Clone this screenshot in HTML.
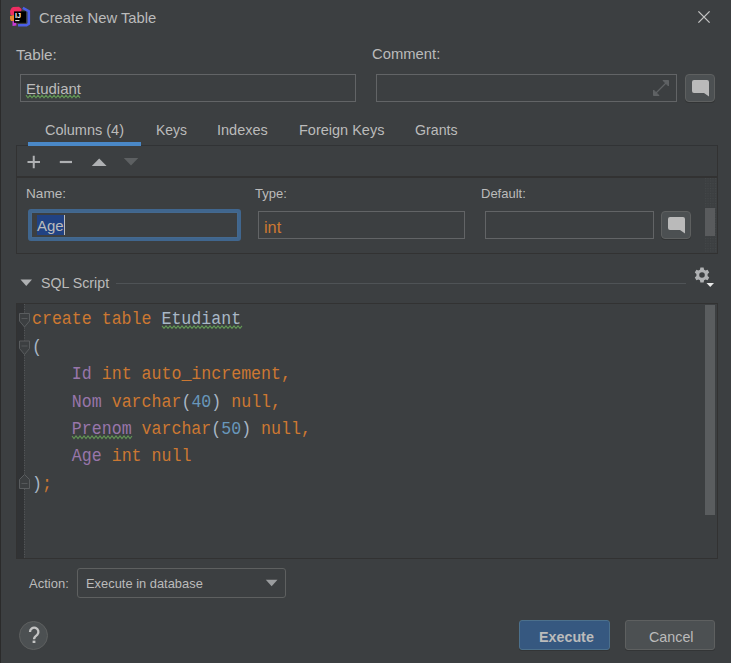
<!DOCTYPE html>
<html><head><meta charset="utf-8">
<style>
*{box-sizing:border-box;margin:0;padding:0}
html,body{width:731px;height:663px;overflow:hidden;background:#3c3f41}
body{position:relative;font-family:"Liberation Sans",sans-serif;color:#bbbbbb;font-size:14.5px}
.a{position:absolute}
.t{position:absolute;white-space:pre;line-height:20px}
.field{position:absolute;border:1px solid #626466}
.btn{position:absolute;border:1px solid #5e6060;background:#4c5052;border-radius:3px}
.code{position:absolute;font-family:"Liberation Mono",monospace;font-size:16.6px;white-space:pre;line-height:27.43px;color:#a9b7c6}
.k{color:#cc7832}.v{color:#9876aa}.n{color:#6897bb}
</style></head><body>
<div class="a" style="left:0;top:0;width:1px;height:663px;background:#2b2b2b"></div>

<!-- title icon -->
<svg class="a" style="left:0;top:0" width="36" height="32" viewBox="0 0 36 32">
  <path d="M13 7 L19 6.8 L21.5 9 L21 13 L13 15.5 L10.5 15 L10 11 L11.5 8 Z" fill="#ee2d62"/>
  <path d="M10 16 L14 15 L14.5 21 L11 21 L10 19 Z" fill="#e8842f"/>
  <path d="M12.5 21 L16 21.5 L16.5 25.5 L12.5 26 Z" fill="#c83ad2"/>
  <path d="M22.8 7.8 L28.8 11.2 L28.8 23.8 L26.5 25.3 L18 25.3" fill="none" stroke="#4b5fe6" stroke-width="2.6"/>
  <rect x="14" y="11.4" width="12" height="11.4" fill="#000"/>
  <text x="15" y="18" font-family="Liberation Sans" font-weight="bold" font-size="7.2" fill="#fff">IJ</text>
  <rect x="15.2" y="20" width="4.2" height="1.1" fill="#ddd"/>
</svg>
<div class="t" style="left:39px;top:8px;font-size:14.8px">Create New Table</div>
<!-- close -->
<svg class="a" style="left:696px;top:9px" width="16" height="16" viewBox="0 0 16 16">
  <path d="M2.4 2.4 L13.6 13.6 M13.6 2.4 L2.4 13.6" stroke="#c4c4c4" stroke-width="1.3"/>
</svg>

<div class="t" style="left:16px;top:45px;font-size:15.3px">Table:</div>
<div class="t" style="left:372px;top:44px;font-size:14.8px">Comment:</div>

<div class="field" style="left:20px;top:74px;width:336px;height:28px"></div>
<div class="t" style="left:26px;top:79px;font-size:15px">Etudiant</div>

<div class="field" style="left:376px;top:74px;width:301px;height:28px"></div>
<div class="btn" style="left:685px;top:74px;width:30px;height:28px;border-radius:4px;box-shadow:0 1px 0 #323435"></div>
<svg class="a" style="left:692px;top:80px" width="18" height="17" viewBox="0 0 18 17"><path d="M2 0 L15 0 Q17 0 17 2 L17 16.5 L12 13 L2 13 Q0 13 0 11 L0 2 Q0 0 2 0 Z" fill="#bababa"/></svg>
<svg class="a" style="left:652px;top:79px" width="18" height="18" viewBox="0 0 18 18"><path d="M11 1.5 L16.5 1.5 L16.5 7 Z M1.5 11 L1.5 16.5 L7 16.5 Z" fill="#5f6264" stroke="#5f6264" stroke-width="1"/><path d="M14.5 3.5 L3.5 14.5" stroke="#5f6264" stroke-width="1.3"/></svg>

<!-- tabs -->
<div class="t" style="left:45px;top:120px">Columns (4)</div>
<div class="t" style="left:156px;top:120px;font-size:13.9px">Keys</div>
<div class="t" style="left:217px;top:120px">Indexes</div>
<div class="t" style="left:299px;top:120px">Foreign Keys</div>
<div class="t" style="left:415px;top:120px;font-size:14.2px">Grants</div>
<div class="a" style="left:28px;top:142px;width:113px;height:4px;background:#4a88c7;z-index:2"></div>

<!-- columns panel -->
<div class="a" style="left:16px;top:145px;width:702px;height:109px;border:1px solid #323232;border-top-color:#313335"></div>
<div class="a" style="left:16px;top:176px;width:702px;height:2px;background:#323232"></div>

<svg class="a" style="left:20px;top:150px" width="125" height="24" viewBox="0 0 125 24">
 <path d="M7.5 12 L20 12 M13.75 5.8 L13.75 18.2" stroke="#afb1b3" stroke-width="2"/>
 <path d="M39.8 12 L52 12" stroke="#afb1b3" stroke-width="2.2"/>
 <path d="M71.8 16 L86.6 16 L79.2 8.5 Z" fill="#afb1b3"/>
 <path d="M103.8 8 L118.3 8 L111 15.6 Z" fill="#5d6062"/>
</svg>
<div class="t" style="left:26px;top:184px;font-size:13.6px">Name:</div>
<div class="t" style="left:255px;top:184px;font-size:13px">Type:</div>
<div class="t" style="left:481px;top:184px;font-size:13px">Default:</div>

<div class="a" style="left:28px;top:209px;width:213px;height:32px;border:3px solid #40668e;border-radius:3px"></div>
<div class="a" style="left:31px;top:212px;width:207px;height:26px;border:1px solid #44698f"></div>
<div class="a" style="left:37px;top:215px;width:27px;height:20px;background:#214283"></div>
<div class="a" style="left:64px;top:215px;width:1px;height:20px;background:#bbbbbb"></div>
<div class="t" style="left:37px;top:216px;font-size:15px">Age</div>
<div class="t" style="left:264px;top:216.5px;font-size:16.3px;color:#cc7832">int</div>
<div class="field" style="left:258px;top:211px;width:207px;height:28px"></div>
<div class="field" style="left:485px;top:211px;width:169px;height:28px"></div>
<div class="btn" style="left:661px;top:211px;width:30px;height:28px;border-radius:4px;box-shadow:0 1px 0 #323435"></div>
<svg class="a" style="left:668px;top:217px" width="18" height="17" viewBox="0 0 18 17"><path d="M2 0 L15 0 Q17 0 17 2 L17 16.5 L12 13 L2 13 Q0 13 0 11 L0 2 Q0 0 2 0 Z" fill="#bababa"/></svg>
<svg class="a" style="left:705px;top:178px" width="12" height="75"><defs><pattern id="dp" width="2.5" height="2.5" patternUnits="userSpaceOnUse"><rect x="0" y="0" width="1" height="1" fill="#45484a"/></pattern></defs><rect width="12" height="75" fill="url(#dp)"/></svg>
<div class="a" style="left:705px;top:208px;width:10px;height:28px;background:#595b5d"></div>

<div class="t" style="left:41px;top:273px;font-size:14.2px">SQL Script</div>
<svg class="a" style="left:20px;top:279px" width="13" height="8" viewBox="0 0 13 8"><path d="M0.5 0.5 L12 0.5 L6.25 7 Z" fill="#afb1b3"/></svg>
<div class="a" style="left:116px;top:283px;width:570px;height:1px;background:#4f5356"></div>
<svg class="a" style="left:692px;top:265px" width="24" height="24" viewBox="0 0 24 24">
 <g transform="translate(10,10)" fill="#afb1b3">
  <path fill-rule="evenodd" d="M-1.6 -7.4 L1.6 -7.4 L2.1 -5.3 L3.6 -4.5 L5.6 -5.3 L7.2 -2.5 L5.6 -1.1 L5.6 1.1 L7.2 2.5 L5.6 5.3 L3.6 4.5 L2.1 5.3 L1.6 7.4 L-1.6 7.4 L-2.1 5.3 L-3.6 4.5 L-5.6 5.3 L-7.2 2.5 L-5.6 1.1 L-5.6 -1.1 L-7.2 -2.5 L-5.6 -5.3 L-3.6 -4.5 L-2.1 -5.3 Z M0 -2.8 A2.8 2.8 0 1 0 0 2.8 A2.8 2.8 0 1 0 0 -2.8 Z"/>
 </g>
 <path d="M14.5 18 L22 18 L18.25 22 Z" fill="#e8e8e8"/>
</svg>

<!-- editor -->
<div class="a" style="left:16px;top:303px;width:702px;height:256px;border:1px solid #323232"></div>
<div class="a" style="left:17px;top:304px;width:7px;height:254px;background:#313335"></div>
<div class="a" style="left:705px;top:305px;width:10px;height:210px;background:#5a5d5f"></div>

<svg class="a" style="left:0;top:0" width="731" height="663" viewBox="0 0 731 663">
 <g stroke="#56595b" stroke-width="1" fill="none" stroke-dasharray="1 1.5">
  <path d="M24.5 304 V313 M24.5 327.5 V340.5 M24.5 355 V474 M24.5 489 V558"/>
 </g>
 <g stroke="#5a5d5f" stroke-width="1" fill="#3c3f41">
  <path d="M19.5 313.5 H29.5 V321 L24.5 327 L19.5 321 Z"/>
  <path d="M19.5 341 H29.5 V348.5 L24.5 354.5 L19.5 348.5 Z"/>
  <path d="M24.5 474.5 L29.5 479.5 V488.5 H19.5 V479.5 Z"/>
 </g>
 <g stroke="#55585a" stroke-width="1">
  <path d="M21.5 318.5 H27.5 M21.5 346 H27.5 M21.5 483.5 H27.5"/>
 </g>
 <polyline points="162.0,325.8 164.0,328.4 166.0,325.8 168.0,328.4 170.0,325.8 172.0,328.4 174.0,325.8 176.0,328.4 178.0,325.8 180.0,328.4 182.0,325.8 184.0,328.4 186.0,325.8 188.0,328.4 190.0,325.8 192.0,328.4 194.0,325.8 196.0,328.4 198.0,325.8 200.0,328.4 202.0,325.8 204.0,328.4 206.0,325.8 208.0,328.4 210.0,325.8 212.0,328.4 214.0,325.8 216.0,328.4 218.0,325.8 220.0,328.4 222.0,325.8 224.0,328.4 226.0,325.8 228.0,328.4 230.0,325.8 232.0,328.4 234.0,325.8 236.0,328.4 238.0,325.8 240.0,328.4 242.0,325.8" fill="none" stroke="#629755" stroke-width="1.1"/>
 <polyline points="72.0,436.0 74.0,438.6 76.0,436.0 78.0,438.6 80.0,436.0 82.0,438.6 84.0,436.0 86.0,438.6 88.0,436.0 90.0,438.6 92.0,436.0 94.0,438.6 96.0,436.0 98.0,438.6 100.0,436.0 102.0,438.6 104.0,436.0 106.0,438.6 108.0,436.0 110.0,438.6 112.0,436.0 114.0,438.6 116.0,436.0 118.0,438.6 120.0,436.0 122.0,438.6 124.0,436.0 126.0,438.6 128.0,436.0 130.0,438.6 132.0,436.0" fill="none" stroke="#629755" stroke-width="1.1"/>
 <polyline points="26.0,95.2 28.0,97.8 30.0,95.2 32.0,97.8 34.0,95.2 36.0,97.8 38.0,95.2 40.0,97.8 42.0,95.2 44.0,97.8 46.0,95.2 48.0,97.8 50.0,95.2 52.0,97.8 54.0,95.2 56.0,97.8 58.0,95.2 60.0,97.8 62.0,95.2 64.0,97.8 66.0,95.2 68.0,97.8 70.0,95.2 72.0,97.8 74.0,95.2 76.0,97.8 78.0,95.2 80.0,97.8" fill="none" stroke="#629755" stroke-width="1.1"/>
</svg>
<div class="code" style="left:32px;top:306.3px;line-height:25.64px;transform:scaleY(1.07);transform-origin:0 0"><span class="k">create table </span>Etudiant
(
    <span class="v">Id</span> <span class="k">int auto_increment,</span>
    <span class="v">Nom</span> <span class="k">varchar</span>(<span class="n">40</span>) <span class="k">null,</span>
    <span class="v">Prenom</span> <span class="k">varchar</span>(<span class="n">50</span>) <span class="k">null,</span>
    <span class="v">Age</span> <span class="k">int null</span>
)<span class="k">;</span></div>

<div class="t" style="left:29px;top:574px;font-size:13px">Action:</div>
<div class="a" style="left:77px;top:568px;width:209px;height:30px;border:1px solid #5e6060;border-radius:3px"></div>
<div class="t" style="left:86px;top:573.5px;font-size:12.9px">Execute in database</div>
<svg class="a" style="left:264px;top:578px" width="14" height="10" viewBox="0 0 14 10"><path d="M1.8 1.8 L13.5 1.8 L7.65 8.3 Z" fill="#9b9d9f"/></svg>

<div class="a" style="left:19px;top:621px;width:29px;height:29px;border:1px solid #5e6060;border-radius:50%;background:#4c5052"></div>
<svg class="a" style="left:0;top:600px" width="60" height="60" viewBox="0 600 60 60"><path d="M30 632 A4.2 4.2 0 1 1 37.4 634.6 Q34 637 34 639.3" fill="none" stroke="#c4c4c4" stroke-width="2.3"/><rect x="32.6" y="640.6" width="2.8" height="2.4" fill="#c4c4c4"/></svg>

<div class="a" style="left:519px;top:620px;width:91px;height:30px;border:1px solid #4c708c;border-radius:3px;background:#365880;box-shadow:0 1px 0 #333536"></div>
<div class="t" style="left:539px;top:626.5px;font-weight:bold;font-size:14.3px">Execute</div>
<div class="btn" style="left:625px;top:620px;width:90px;height:30px;box-shadow:0 1px 0 #333536"></div>
<div class="t" style="left:649px;top:626.5px;font-size:14.3px">Cancel</div>

</body></html>
